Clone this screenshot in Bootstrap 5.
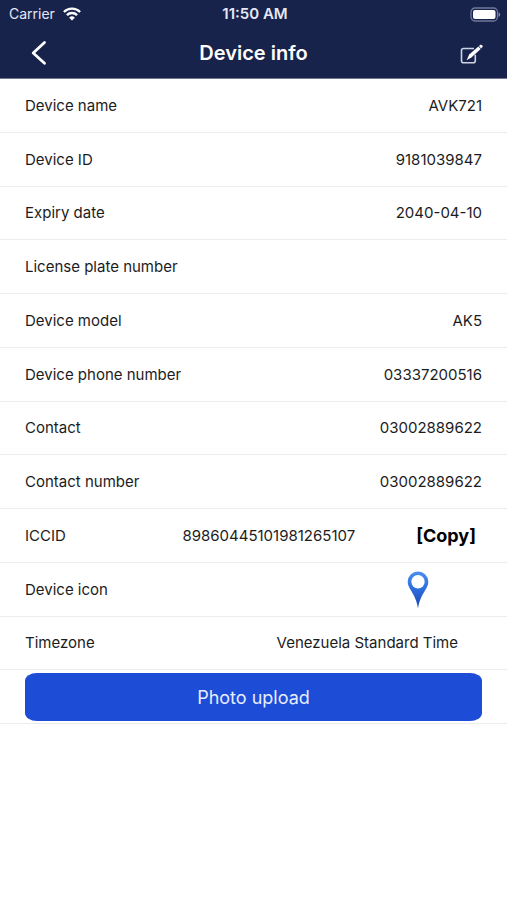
<!DOCTYPE html>
<html lang="en">
<head>
<meta charset="utf-8">
<meta name="viewport" content="width=device-width, initial-scale=1">
<title>Device info</title>
<link href="https://cdn.jsdelivr.net/npm/bootstrap@5.3.0/dist/css/bootstrap.min.css" rel="stylesheet">
<style>
  body { font-family: Inter, "Liberation Sans", sans-serif; font-size: 15px; line-height: 20px; color: #1c1c1e; background: #fff; }
  .app-header { background: #18234b; color: #fff; border-bottom: 1px solid #6f7795; }
  .status-bar { height: 28px; font-size: 14px; padding: 0 6px 0 9px; color: #e4e8f4; }
  .status-time { font-size: 15px; font-weight: 600; }
  .title-bar { height: 50px; padding: 0 24px; }
  .title-bar h1 { font-size: 20px; line-height: 28px; font-weight: 600; }
  .side { flex: 1 1 0; }
  .icon-btn { line-height: 0; }
  .info-row { height: 54px; padding: 0 25px; border-bottom: 1px solid #ececec; }
  .info-row:nth-child(4n+3) { height: 53px; }
  .info-row dt { font-weight: 400; }
  .inset { padding-right: 24px; }
  .copy-btn { font-size: 18px; line-height: 24px; font-weight: 700; color: #000; margin: 0 6px 0 61px; }
  .pin-btn { margin-right: 53px; }
  .upload-row { height: 54px; padding: 3px 25px 2px; border-bottom: 1px solid #ececec; }
  .upload-btn { background: #1d4cd7; color: #e6edff; font-size: 18px; border-radius: 12px / 8px; }
  .upload-btn:hover { background: #1a44c2; color: #fff; }
</style>
<script defer src="https://cdn.jsdelivr.net/npm/bootstrap@5.3.0/dist/js/bootstrap.bundle.min.js"></script>
</head>
<body>
<header class="app-header">
  <div class="status-bar d-flex align-items-center">
    <div class="side d-flex align-items-center gap-2">
      <span>Carrier</span>
      <svg width="18" height="14" viewBox="0 0 18 14" fill="none" stroke="#fff" stroke-width="2.3" aria-hidden="true"><path d="M.9 5a11.5 11.5 0 0 1 16.2 0M3.9 8.1a7.2 7.2 0 0 1 10.2 0"/><path d="M9 13.6 6.1 10.7a4.1 4.1 0 0 1 5.8 0z" fill="#fff" stroke="none"/></svg>
    </div>
    <span class="status-time">11:50 AM</span>
    <div class="side d-flex justify-content-end">
      <svg width="31" height="15" viewBox="0 0 31 15" aria-hidden="true"><rect x="1" y="1" width="26.500" height="13" rx="4" fill="none" stroke="#70789a" stroke-width="1.300"/><rect x="3" y="3" width="22.500" height="9" rx="2" fill="#fff"/><path d="M28.600 5.200c2 .8 2 3.800 0 4.600z" fill="#8b92ae"/></svg>
    </div>
  </div>
  <div class="title-bar d-flex align-items-center">
    <div class="side d-flex">
      <button type="button" class="btn icon-btn border-0 p-0" aria-label="Back"><svg width="28" height="28" viewBox="0 0 28 28" fill="none" stroke="#fff" stroke-width="2.800" stroke-linecap="round" stroke-linejoin="round"><path d="M20.500 3.500 9.200 14l11.300 10.200"/></svg></button>
    </div>
    <h1 class="mb-0">Device info</h1>
    <div class="side d-flex justify-content-end">
      <button type="button" class="btn icon-btn border-0 p-0" aria-label="Edit"><svg width="24" height="24" viewBox="0 0 24 24"><path d="M15 7.500H4.500a2 2 0 0 0-2 2v10.300a2 2 0 0 0 2 2h9.800a2 2 0 0 0 2-2v-6" fill="none" stroke="#cdd3e6" stroke-width="1.600"/><path d="m7.600 19.200 2.600-5.700L19.400 5.600l2.300 2.500-9.300 8.400z" fill="#fff"/><path d="m20 5 1.400-1.200c1.300-.7 2.900.9 2 2.200l-1.300 1.400z" fill="#fff"/></svg></button>
    </div>
  </div>
</header>
<main>
  <dl class="mb-0">
    <div class="info-row d-flex align-items-center justify-content-between"><dt>Device name</dt><dd class="mb-0">AVK721</dd></div>
    <div class="info-row d-flex align-items-center justify-content-between"><dt>Device ID</dt><dd class="mb-0">9181039847</dd></div>
    <div class="info-row d-flex align-items-center justify-content-between"><dt>Expiry date</dt><dd class="mb-0">2040-04-10</dd></div>
    <div class="info-row d-flex align-items-center justify-content-between"><dt>License plate number</dt><dd class="mb-0"></dd></div>
    <div class="info-row d-flex align-items-center justify-content-between"><dt>Device model</dt><dd class="mb-0">AK5</dd></div>
    <div class="info-row d-flex align-items-center justify-content-between"><dt>Device phone number</dt><dd class="mb-0">03337200516</dd></div>
    <div class="info-row d-flex align-items-center justify-content-between"><dt>Contact</dt><dd class="mb-0">03002889622</dd></div>
    <div class="info-row d-flex align-items-center justify-content-between"><dt>Contact number</dt><dd class="mb-0">03002889622</dd></div>
    <div class="info-row d-flex align-items-center justify-content-between"><dt>ICCID</dt><dd class="mb-0 d-flex align-items-center">89860445101981265107<button type="button" class="btn copy-btn border-0 p-0">[Copy]</button></dd></div>
    <div class="info-row d-flex align-items-center justify-content-between"><dt>Device icon</dt><dd class="mb-0"><button type="button" class="btn icon-btn pin-btn border-0 p-0" aria-label="Change device icon"><svg width="22" height="38" viewBox="0 0 22 38"><defs><linearGradient id="pinFill" x1="0" y1="0" x2="0" y2="1"><stop offset="0" stop-color="#4b8df0"/><stop offset=".45" stop-color="#2f6fdd"/><stop offset="1" stop-color="#1746b4"/></linearGradient></defs><path d="M11 37.500C9.800 30 7.600 25.500 4 19.500 2 16.300.700 14 .700 10.800a10.300 10.300 0 0 1 20.600 0c0 3.200-1.300 5.500-3.300 8.700-3.600 6-5.800 10.500-7 18z" fill="url(#pinFill)"/><circle cx="11" cy="10.700" r="6.700" fill="#fff"/></svg></button></dd></div>
    <div class="info-row d-flex align-items-center justify-content-between"><dt>Timezone</dt><dd class="mb-0 inset">Venezuela Standard Time</dd></div>
  </dl>
  <div class="upload-row d-flex"><button type="button" class="btn upload-btn flex-fill border-0 p-0">Photo upload</button></div>
</main>
</body>
</html>
